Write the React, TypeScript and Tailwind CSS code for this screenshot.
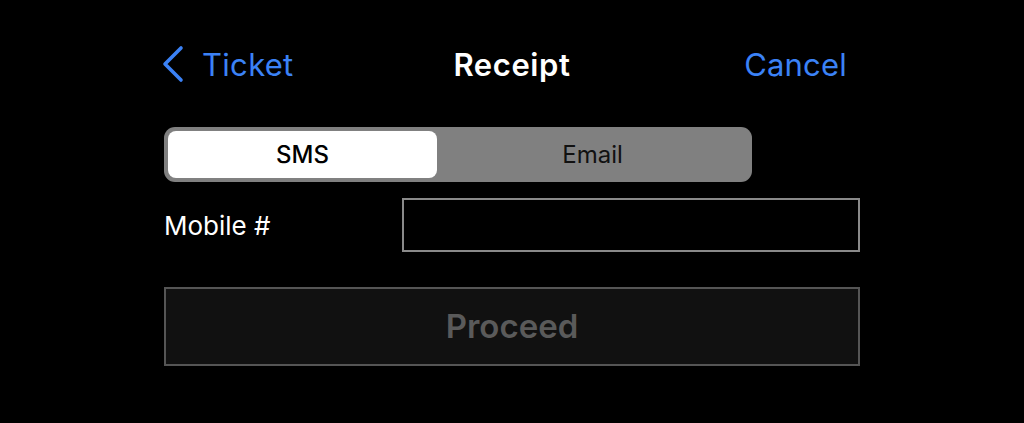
import React from "react";

export default function App() {
  return (
    <div className="w-[1024px] h-[423px] bg-black overflow-hidden" style={{ fontFamily: "Inter, 'Noto Sans', sans-serif" }}>
      <div className="w-[696px] mx-auto flex flex-col">
        <div className="mt-[43px] h-[42px] grid grid-cols-[1fr_auto_1fr] items-center">
          <div className="flex items-center text-[#3b82f6]">
            <svg width="24" height="38" viewBox="0 0 24 38" className="-ml-[2px]">
              <path d="M19 3 L3 19 L19 35" fill="none" stroke="#3b82f6" strokeWidth="3.6" strokeLinecap="round" strokeLinejoin="round" />
            </svg>
            <span className="ml-[16px] text-[31px] leading-none tracking-[0.3px]">Ticket</span>
          </div>
          <div className="text-white text-[31px] font-semibold leading-none tracking-[0.6px]">Receipt</div>
          <div className="justify-self-end mr-[13px] text-[#3b82f6] text-[31px] leading-none tracking-[0.2px]">Cancel</div>
        </div>
        <div className="mt-[42px] w-[588px] h-[55px] bg-[#808080] rounded-[11px] p-[4px] flex">
          <div className="w-[269px] h-full bg-white rounded-[8px] flex items-center justify-center text-black text-[24px] font-medium">SMS</div>
          <div className="flex-1 flex items-center justify-center text-[#111] text-[24px]">Email</div>
        </div>
        <div className="mt-[16px] h-[54px] flex items-center">
          <div className="w-[238px] text-white text-[26px]">Mobile #</div>
          <div className="flex-1 h-full border-2 border-[#8a8a8a] bg-black"></div>
        </div>
        <div className="mt-[35px] h-[79px] bg-[#111111] border-2 border-[#555555] flex items-center justify-center text-[#5a5a5a] text-[33px] font-semibold">
          Proceed
        </div>
      </div>
    </div>
  );
}
